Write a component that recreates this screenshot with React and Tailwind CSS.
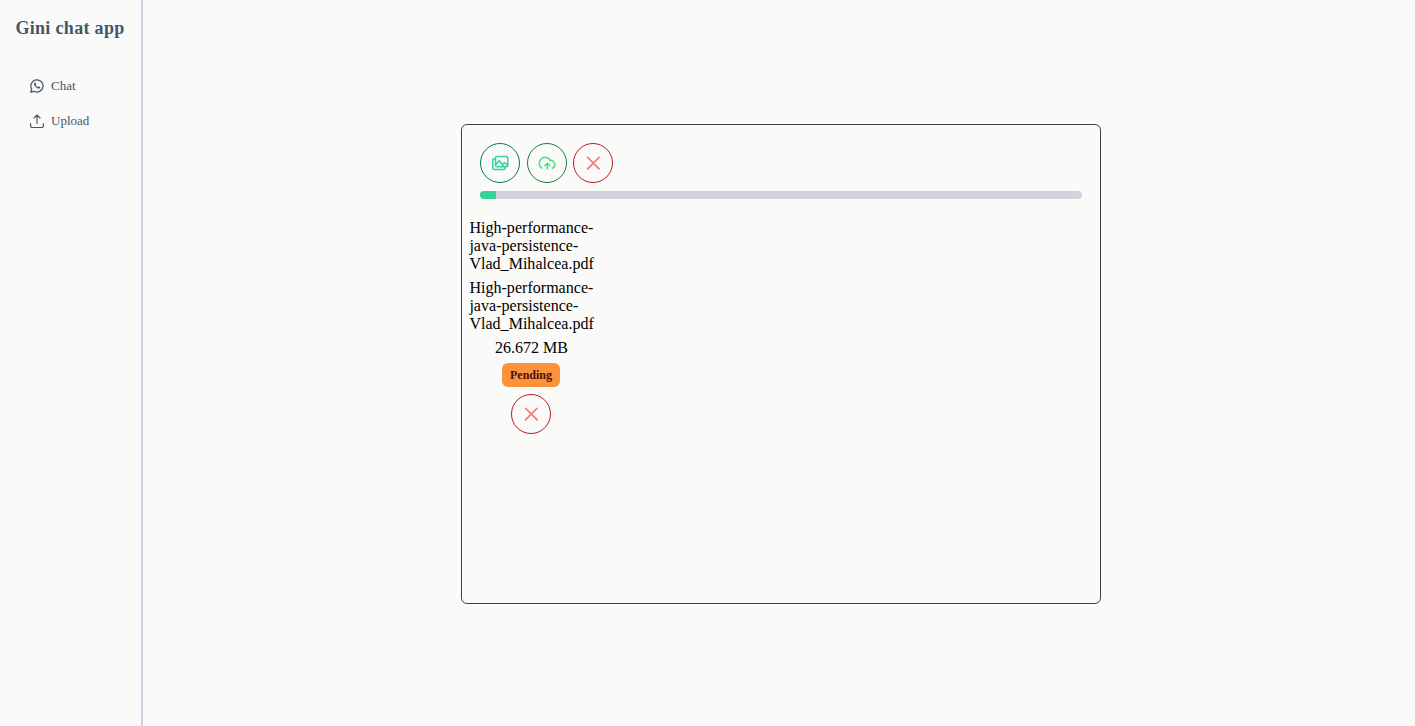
import React from "react";

function WhatsappIcon() {
  return (
    <svg width="14" height="14" viewBox="0 0 14 14" fill="none" stroke="currentColor" strokeWidth="1.25" strokeLinecap="round" strokeLinejoin="round" className="mb-px">
      <path d="M.8 13.2l.9-3.2A6.1 6.1 0 1 1 4.1 12.3z" />
      <path d="M4.7 3.6c-1.2 1-.8 2.6.7 4.2 1.700 1.800 3.600 2.500 4.600 1.200.3-.4.3-.8 0-.95L8.700 7.400c-.4-.2-.6.5-1 .65C6.900 7.900 6 7 5.700 6.200c.1-.4.6-.6.45-1L5.600 3.800c-.15-.35-.6-.45-.9-.2z" fill="currentColor" stroke="none" />
    </svg>
  );
}

function UploadIcon() {
  return (
    <svg width="14" height="14" viewBox="0 0 14 14" fill="none" stroke="currentColor" strokeWidth="1.15" strokeLinecap="round" strokeLinejoin="round">
      <path d="M7 9.5V1M3.9 4.1 7 1l3.1 3.1M.6 9.5v2.6c0 .8.6 1.4 1.4 1.4h10c.8 0 1.4-.6 1.4-1.4V9.5" />
    </svg>
  );
}

function ImagesIcon() {
  return (
    <svg width="18" height="18" viewBox="0 0 18 18" fill="none" stroke="currentColor" strokeWidth="1.5" strokeLinecap="round" strokeLinejoin="round">
      <rect x="4.5" y="2.4" width="12.3" height="10.3" rx="1.5" />
      <path d="M4.3 4.7H3.2c-.8 0-1.4.6-1.4 1.4v8.1c0 .8.6 1.4 1.4 1.4h9.6c.8 0 1.4-.6 1.4-1.4v-1.3" />
      <path d="m4.8 10.5 3.6-3.9 4.1 5.6M11.2 10.3l2.3-1.7 3 2.9" />
    </svg>
  );
}

function CloudUploadIcon() {
  return (
    <svg width="18" height="18" viewBox="0 0 18 18" fill="none" stroke="currentColor" strokeWidth="1.5" strokeLinecap="round" strokeLinejoin="round">
      <path d="M4 14.2C2.2 13.3 1.3 11.6 1.3 9.5c0-3.6 2.4-6.3 5.6-6.3 2.4 0 4.2 1.2 5 3.2 2.8-.3 4.9 1.5 4.9 4.1 0 1.7-.9 3.1-2.4 3.7" />
      <path d="M9.3 15V9.4M6.7 11.7l2.6-2.5 2.6 2.5" />
    </svg>
  );
}

function TimesIcon() {
  return (
    <svg width="18" height="18" viewBox="0 0 18 18" fill="none" stroke="currentColor" strokeWidth="1.6" strokeLinecap="round">
      <path d="m3.5 3.3 11.6 11.6M15.1 3.3 3.5 14.9" />
    </svg>
  );
}

function RoundButton({ label, className, children }) {
  return (
    <button aria-label={label} className={`flex size-10 items-center justify-center rounded-full border ${className}`}>
      {children}
    </button>
  );
}

function FileName() {
  return (
    <div className="w-[124px] pl-[0.4px] tracking-[0.03px] whitespace-nowrap">
      High-performance-
      <br />
      java-persistence-
      <br />
      Vlad_Mihalcea.pdf
    </div>
  );
}

export default function App() {
  return (
    <div className="flex h-screen overflow-hidden bg-[#fafafa] font-['Liberation_Serif',serif]">
      <aside className="w-[143px] shrink-0 border-r-2 border-[#cbd5e1] text-[#475569]">
        <h1 className="pt-[14px] pl-[15.4px] text-[18px] leading-7 font-bold tracking-[0.32px] whitespace-nowrap">Gini chat app</h1>
        <nav className="mt-[34px] flex flex-col gap-[15px] pl-[30px] text-[13px] leading-5">
          <a className="flex items-center gap-[7px]">
            <WhatsappIcon />
            <span>Chat</span>
          </a>
          <a className="flex items-center gap-[7px]">
            <UploadIcon />
            <span>Upload</span>
          </a>
        </nav>
      </aside>
      <main className="flex flex-1 items-center justify-center pt-[2px] pl-1">
        <section className="h-[480px] w-[640px] rounded-md border border-[#3f3f46] bg-[#fafaf9]">
          <div className="px-[18px] pt-[18px]">
            <div className="flex">
              <RoundButton label="Choose" className="border-[#047857] text-[#34d399]">
                <ImagesIcon />
              </RoundButton>
              <RoundButton label="Upload" className="ml-[7px] border-[#15803d] text-[#4ade80]">
                <CloudUploadIcon />
              </RoundButton>
              <RoundButton label="Clear" className="ml-[6px] border-[#b91c1c] text-[#f87171]">
                <TimesIcon />
              </RoundButton>
            </div>
            <div className="mt-2 h-2 overflow-hidden rounded-md bg-[#d1d5db]">
              <div className="h-full w-4 bg-[#34d399]" />
            </div>
          </div>
          <div className="mt-5 ml-[7px] flex w-[124px] flex-col items-center gap-[6px] text-[16px] leading-[18px] text-black">
            <FileName />
            <FileName />
            <div className="pl-px">26.672 MB</div>
            <span className="flex h-6 items-center rounded-md bg-[#fb923c] px-2 text-[12px] font-bold text-[#431407]">Pending</span>
            <RoundButton label="Remove" className="mt-px border-[#b91c1c] text-[#f87171]">
              <TimesIcon />
            </RoundButton>
          </div>
        </section>
      </main>
    </div>
  );
}
